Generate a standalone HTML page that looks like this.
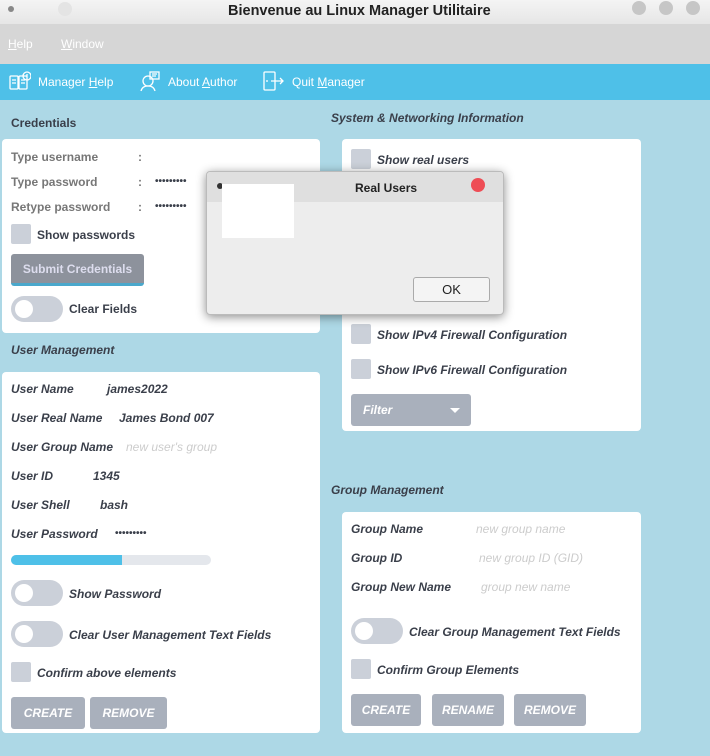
<!DOCTYPE html>
<html><head><meta charset="utf-8"><style>
*{margin:0;padding:0;box-sizing:border-box}
body{width:710px;height:756px;overflow:hidden;background:#add8e6;font-family:"Liberation Sans",sans-serif;position:relative;color:#3a3f4a}
.a{position:absolute;white-space:nowrap}
.card{position:absolute;background:#fff;border-radius:4px}
.b{font-weight:bold;font-size:12px}
.i{font-style:italic}
.cb{position:absolute;width:20px;height:20px;background:#cbd0d9;border-radius:2px}
.tg{position:absolute;width:52px;height:26px;background:#cbd0d9;border-radius:13px}
.tg:after{content:"";position:absolute;left:4px;top:4px;width:18px;height:18px;border-radius:9px;background:#fff}
.btn{position:absolute;background:#a9b0bc;border-radius:3px;color:#fff;font-weight:bold;font-style:italic;font-size:12px;text-align:center}
.ph{color:#ccc;font-weight:normal}
.lg{color:#777}
</style></head><body>
<div class="a" style="left:0;top:0;width:710px;height:24px;background:linear-gradient(#f4f4f4,#e6e6e6)"></div>
<div class="a" style="left:8px;top:6px;width:6px;height:6px;border-radius:3px;background:#888"></div>
<div class="a" style="left:58px;top:2px;width:14px;height:14px;border-radius:7px;background:#e4e4e4"></div>
<div class="a" style="left:632px;top:1px;width:14px;height:14px;border-radius:7px;background:#c6c6c6"></div>
<div class="a" style="left:659px;top:1px;width:14px;height:14px;border-radius:7px;background:#c6c6c6"></div>
<div class="a" style="left:686px;top:1px;width:14px;height:14px;border-radius:7px;background:#c6c6c6"></div>
<div class="a" style="left:228px;top:3px;font-weight:bold;font-size:14.5px;color:#222">Bienvenue au Linux Manager Utilitaire</div>
<div class="a" style="left:0;top:24px;width:710px;height:40px;background:#d6d6d6"></div>
<div class="a" style="left:8px;top:37px;font-size:12px;color:#fff"><u>H</u>elp</div>
<div class="a" style="left:61px;top:37px;font-size:12px;color:#fff"><u>W</u>indow</div>
<div class="a" style="left:0;top:64px;width:710px;height:36px;background:#4ec0e8"></div>
<svg class="a" style="left:9px;top:71px" width="22" height="20" viewBox="0 0 22 20" fill="none" stroke="#fff" stroke-width="1.3"><rect x="1" y="5" width="8" height="13" rx="1"/><rect x="10" y="5" width="8" height="13" rx="1"/><circle cx="18" cy="5" r="4"/><path d="M18 3v2.5M3 9h4M3 12h4M12 9h4M12 12h4"/></svg>
<div class="a" style="left:38px;top:75px;font-size:12px;color:#fff">Manager <u>H</u>elp</div>
<svg class="a" style="left:139px;top:70px" width="22" height="22" viewBox="0 0 22 22" fill="none" stroke="#fff" stroke-width="1.3"><circle cx="9" cy="11" r="5"/><path d="M2 21c1-4 4-5 7-5s6 1 7 5"/><rect x="11" y="2" width="9" height="7"/><path d="M13 4h5M13 6h4"/></svg>
<div class="a" style="left:168px;top:75px;font-size:12px;color:#fff">About <u>A</u>uthor</div>
<svg class="a" style="left:263px;top:71px" width="22" height="20" viewBox="0 0 22 20" fill="none" stroke="#fff" stroke-width="1.3"><rect x="1" y="1" width="11" height="18" rx="1"/><path d="M8 10h12M17 7l3 3-3 3M4 9v2"/></svg>
<div class="a" style="left:292px;top:75px;font-size:12px;color:#fff">Quit <u>M</u>anager</div>

<div class="a b" style="left:11px;top:116px">Credentials</div>
<div class="card" style="left:2px;top:139px;width:318px;height:194px"></div>
<div class="a b lg" style="left:11px;top:150px">Type username</div><div class="a b lg" style="left:138px;top:150px">:</div>
<div class="a b lg" style="left:11px;top:175px">Type password</div><div class="a b lg" style="left:138px;top:175px">:</div><div class="a" style="left:155px;top:176px;font-size:10px;font-weight:bold">•••••••••</div>
<div class="a b lg" style="left:11px;top:200px">Retype password</div><div class="a b lg" style="left:138px;top:200px">:</div><div class="a" style="left:155px;top:201px;font-size:10px;font-weight:bold">•••••••••</div>
<div class="cb" style="left:11px;top:224px"></div><div class="a b" style="left:37px;top:228px">Show passwords</div>
<div class="a" style="left:11px;top:254px;width:133px;height:32px;background:#8d929c;border-radius:3px;border-bottom:3px solid #4aa8cc;color:#dde;font-weight:bold;font-size:12px;text-align:center;line-height:31px">Submit Credentials</div>
<div class="tg" style="left:11px;top:296px"></div><div class="a b" style="left:69px;top:302px">Clear Fields</div>

<div class="a b i" style="left:11px;top:343px">User Management</div>
<div class="card" style="left:2px;top:372px;width:318px;height:361px"></div>
<div class="a b i" style="left:11px;top:382px">User Name</div><div class="a b i" style="left:107px;top:382px">james2022</div>
<div class="a b i" style="left:11px;top:411px">User Real Name</div><div class="a b i" style="left:119px;top:411px">James Bond 007</div>
<div class="a b i" style="left:11px;top:440px">User Group Name</div><div class="a b i ph" style="left:126px;top:440px">new user's group</div>
<div class="a b i" style="left:11px;top:469px">User ID</div><div class="a b i" style="left:93px;top:469px">1345</div>
<div class="a b i" style="left:11px;top:498px">User Shell</div><div class="a b i" style="left:100px;top:498px">bash</div>
<div class="a b i" style="left:11px;top:527px">User Password</div><div class="a" style="left:115px;top:528px;font-size:10px;font-weight:bold">•••••••••</div>
<div class="a" style="left:11px;top:555px;width:200px;height:10px;background:#e4e7ec;border-radius:5px"></div>
<div class="a" style="left:11px;top:555px;width:111px;height:10px;background:#4ec0e8;border-radius:5px 0 0 5px"></div>
<div class="tg" style="left:11px;top:580px"></div><div class="a b i" style="left:69px;top:587px">Show Password</div>
<div class="tg" style="left:11px;top:621px"></div><div class="a b i" style="left:69px;top:628px">Clear User Management Text Fields</div>
<div class="cb" style="left:11px;top:662px"></div><div class="a b i" style="left:37px;top:666px">Confirm above elements</div>
<div class="btn" style="left:11px;top:697px;width:74px;height:32px;line-height:32px">CREATE</div>
<div class="btn" style="left:90px;top:697px;width:77px;height:32px;line-height:32px">REMOVE</div>

<div class="a b i" style="left:331px;top:111px">System &amp; Networking Information</div>
<div class="card" style="left:342px;top:139px;width:299px;height:292px"></div>
<div class="cb" style="left:351px;top:149px"></div><div class="a b i" style="left:377px;top:153px">Show real users</div>
<div class="a b i" style="left:377px;top:223px">Show login shells</div>
<div class="a b i" style="left:377px;top:258px">Show services</div>
<div class="cb" style="left:351px;top:324px"></div><div class="a b i" style="left:377px;top:328px">Show IPv4 Firewall Configuration</div>
<div class="cb" style="left:351px;top:359px"></div><div class="a b i" style="left:377px;top:363px">Show IPv6 Firewall Configuration</div>
<div class="btn" style="left:351px;top:394px;width:120px;height:32px;line-height:32px;text-align:left;padding-left:12px">Filter</div>
<div class="a" style="left:450px;top:408px;border-left:5px solid transparent;border-right:5px solid transparent;border-top:5px solid #fff"></div>

<div class="a b i" style="left:331px;top:483px">Group Management</div>
<div class="card" style="left:342px;top:512px;width:299px;height:221px"></div>
<div class="a b i" style="left:351px;top:522px">Group Name</div><div class="a b i ph" style="left:476px;top:522px">new group name</div>
<div class="a b i" style="left:351px;top:551px">Group ID</div><div class="a b i ph" style="left:479px;top:551px">new group ID (GID)</div>
<div class="a b i" style="left:351px;top:580px">Group New Name</div><div class="a b i ph" style="left:481px;top:580px">group new name</div>
<div class="tg" style="left:351px;top:618px"></div><div class="a b i" style="left:409px;top:625px">Clear Group Management Text Fields</div>
<div class="cb" style="left:351px;top:659px"></div><div class="a b i" style="left:377px;top:663px">Confirm Group Elements</div>
<div class="btn" style="left:351px;top:694px;width:70px;height:32px;line-height:32px">CREATE</div>
<div class="btn" style="left:432px;top:694px;width:72px;height:32px;line-height:32px">RENAME</div>
<div class="btn" style="left:514px;top:694px;width:72px;height:32px;line-height:32px">REMOVE</div>

<div class="a" style="left:206px;top:171px;width:298px;height:144px;background:#ededed;border:1px solid #bbb;border-radius:4px;box-shadow:0 2px 10px rgba(0,0,0,.45)"></div>
<div class="a" style="left:207px;top:172px;width:296px;height:30px;background:#dfdfdf;border-radius:4px 4px 0 0"></div>
<div class="a" style="left:355px;top:181px;font-weight:bold;font-size:12px;color:#222">Real Users</div>
<div class="a" style="left:471px;top:178px;width:14px;height:14px;border-radius:7px;background:#ee4d55"></div>
<div class="a" style="left:217px;top:183px;width:6px;height:6px;border-radius:3px;background:#333"></div>
<div class="a" style="left:222px;top:184px;width:72px;height:54px;background:#fff"></div>
<div class="a" style="left:413px;top:277px;width:77px;height:25px;background:#f4f4f4;border:1px solid #aaa;border-radius:3px;text-align:center;line-height:23px;font-size:13px;color:#222">OK</div>
</body></html>
